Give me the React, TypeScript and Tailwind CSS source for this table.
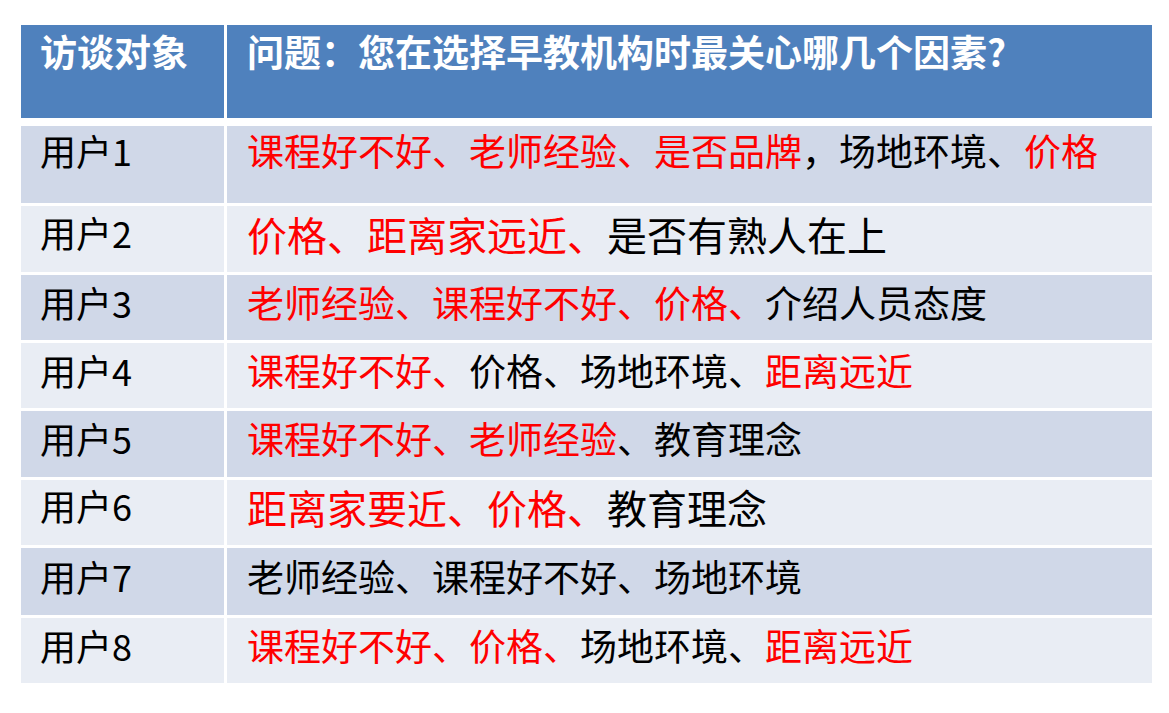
const font = { fontFamily: '"Noto Sans CJK SC", "Open Sans", sans-serif' };

type Seg = [string, boolean];

const rows: { user: string; size: string; h: string; pt: string; bg: string; segs: Seg[] }[] = [
  {
    user: "用户1",
    size: "text-[37px]",
    h: "h-[77px]",
    pt: "pt-[6px]",
    bg: "bg-[#d0d8e8]",
    segs: [
      ["课程好不好、老师经验、是否品牌", true],
      ["，场地环境、", false],
      ["价格", true],
    ],
  },
  {
    user: "用户2",
    size: "text-[40px]",
    h: "h-[66px]",
    pt: "pt-[8px]",
    bg: "bg-[#e9edf4]",
    segs: [
      ["价格、距离家远近、", true],
      ["是否有熟人在上", false],
    ],
  },
  {
    user: "用户3",
    size: "text-[37px]",
    h: "h-[65px]",
    pt: "pt-[9px]",
    bg: "bg-[#d0d8e8]",
    segs: [
      ["老师经验、课程好不好、价格、", true],
      ["介绍人员态度", false],
    ],
  },
  {
    user: "用户4",
    size: "text-[37px]",
    h: "h-[65px]",
    pt: "pt-[9px]",
    bg: "bg-[#e9edf4]",
    segs: [
      ["课程好不好、", true],
      ["价格、场地环境、", false],
      ["距离远近", true],
    ],
  },
  {
    user: "用户5",
    size: "text-[37px]",
    h: "h-[66px]",
    pt: "pt-[9px]",
    bg: "bg-[#d0d8e8]",
    segs: [
      ["课程好不好、老师经验", true],
      ["、教育理念", false],
    ],
  },
  {
    user: "用户6",
    size: "text-[40px]",
    h: "h-[65px]",
    pt: "pt-[7px]",
    bg: "bg-[#e9edf4]",
    segs: [
      ["距离家要近、价格、", true],
      ["教育理念", false],
    ],
  },
  {
    user: "用户7",
    size: "text-[37px]",
    h: "h-[67px]",
    pt: "pt-[10px]",
    bg: "bg-[#d0d8e8]",
    segs: [["老师经验、课程好不好、场地环境", false]],
  },
  {
    user: "用户8",
    size: "text-[37px]",
    h: "h-[65px]",
    pt: "pt-[9px]",
    bg: "bg-[#e9edf4]",
    segs: [
      ["课程好不好、价格、", true],
      ["场地环境、", false],
      ["距离远近", true],
    ],
  },
];

export default function App() {
  return (
    <div className="h-[713px] w-[1169px] bg-white pl-[21px] pt-[25px]" style={font}>
      <div className="flex w-[1131px] flex-col">
        {/* Header */}
        <div className="mb-[8px] flex h-[93px] gap-[3px]">
          <div className="w-[203px] shrink-0 bg-[#4f81bd] pl-[19px] pt-[8px] text-[37px] font-bold leading-none text-white">
            访谈对象
          </div>
          <div className="flex-1 bg-[#4f81bd] pl-[20px] pt-[8px] text-[37px] font-bold leading-none text-white whitespace-nowrap">
            问题：您在选择早教机构时最关心哪几个因素?
          </div>
        </div>

        {/* Rows */}
        <div className="flex flex-col gap-[3px]">
          {rows.map((r) => (
            <div key={r.user} className={`flex gap-[3px] ${r.h}`}>
              <div className={`w-[203px] shrink-0 pl-[19px] ${r.pt} ${r.bg} text-[36px] leading-none text-black`}>
                {r.user}
              </div>
              <div className={`flex-1 whitespace-nowrap pl-[20px] ${r.pt} ${r.bg} ${r.size} leading-none`}>
                {r.segs.map(([t, red], i) => (
                  <span key={i} className={red ? "text-[#ff0000]" : "text-black"}>
                    {t}
                  </span>
                ))}
              </div>
            </div>
          ))}
        </div>
      </div>
    </div>
  );
}
